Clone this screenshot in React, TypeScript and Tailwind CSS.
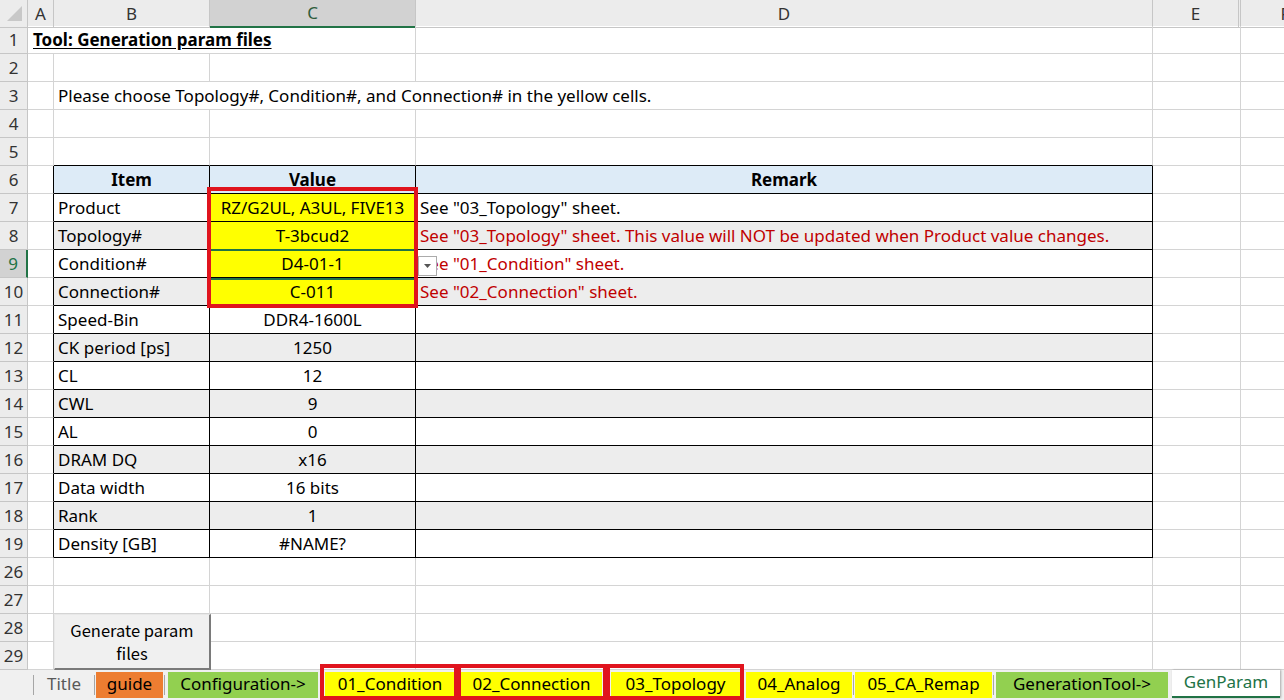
import React from "react";

const COLS = "grid grid-cols-[28px_26px_156px_206px_737px_88px_1fr]";
const GL = "border-[#d4d4d4]";

type DataRow = { n: number; item: string; value: string; remark?: string; red?: boolean; gray?: boolean; yellow?: boolean };

const data: DataRow[] = [
  { n: 7, item: "Product", value: "RZ/G2UL, A3UL, FIVE13", remark: 'See "03_Topology" sheet.', yellow: true },
  { n: 8, item: "Topology#", value: "T-3bcud2", remark: 'See "03_Topology" sheet. This value will NOT be updated when Product value changes.', red: true, gray: true, yellow: true },
  { n: 9, item: "Condition#", value: "D4-01-1", remark: 'See "01_Condition" sheet.', red: true, yellow: true },
  { n: 10, item: "Connection#", value: "C-011", remark: 'See "02_Connection" sheet.', red: true, gray: true, yellow: true },
  { n: 11, item: "Speed-Bin", value: "DDR4-1600L" },
  { n: 12, item: "CK period [ps]", value: "1250", gray: true },
  { n: 13, item: "CL", value: "12" },
  { n: 14, item: "CWL", value: "9", gray: true },
  { n: 15, item: "AL", value: "0" },
  { n: 16, item: "DRAM DQ", value: "x16", gray: true },
  { n: 17, item: "Data width", value: "16 bits" },
  { n: 18, item: "Rank", value: "1", gray: true },
  { n: 19, item: "Density [GB]", value: "#NAME?" },
];

function RowHead({ n, sel }: { n: number; sel?: boolean }) {
  return sel ? (
    <div className="flex items-center justify-center bg-[#d2d2d2] text-[#217346] border-r-2 border-r-[#217346] border-b border-b-[#c6c6c6]">{n}</div>
  ) : (
    <div className="flex items-center justify-center bg-[#ececec] text-[#333] border-r border-b border-[#c6c6c6]">{n}</div>
  );
}

function EmptyRow({ n, blackBottomBD }: { n: number; blackBottomBD?: boolean }) {
  const bb = blackBottomBD ? "border-b-black" : "";
  return (
    <div className={`${COLS} h-[28px]`}>
      <RowHead n={n} />
      <div className={`border-r border-b ${GL}`} />
      <div className={`border-r border-b ${GL} ${bb}`} />
      <div className={`border-r border-b ${GL} ${bb}`} />
      <div className={`border-r border-b ${GL} ${bb}`} />
      <div className={`border-r border-b ${GL}`} />
      <div className={`border-b ${GL}`} />
    </div>
  );
}

function Tab({ label, cls, ml, w }: { label: string; cls: string; ml: string; w: string }) {
  return (
    <div className={`${ml} ${w} h-[26px] flex items-center justify-center pb-[2px] ${cls}`}>{label}</div>
  );
}

function Sep({ ml }: { ml: string }) {
  return <div className={`${ml} w-px h-[20px] bg-[#a6a6a6]`} />;
}

export default function App() {
  return (
    <div className="relative w-[1284px] h-[700px] overflow-hidden bg-white text-[17px] text-black" style={{ fontFamily: '"Noto Sans", "Open Sans", sans-serif' }}>
      {/* Column headers */}
      <div className={`${COLS} h-[26px] bg-[#ececec]`}>
        <div className="relative border-r border-b border-[#c6c6c6]">
          <svg width="28" height="26" className="absolute inset-0">
            <polygon points="22,6 22,21 7,21" fill="#c8c8c8" />
          </svg>
        </div>
        <div className="flex items-center justify-center border-r border-b border-[#c6c6c6] text-[#333]">A</div>
        <div className="flex items-center justify-center border-r border-b border-[#c6c6c6] text-[#333]">B</div>
        <div className="flex items-center justify-center border-r border-[#c6c6c6] bg-[#d2d2d2] border-b-2 border-b-[#217346] text-[#2e5d3c]">C</div>
        <div className="flex items-center justify-center border-r border-b border-[#c6c6c6] text-[#333]">D</div>
        <div className="flex items-center justify-center border-r-[3px] border-double border-b border-[#c6c6c6] text-[#333]">E</div>
        <div className="border-b border-[#c6c6c6] text-[#333] overflow-hidden">
          <div className="w-[88px] h-full flex items-center justify-center">F</div>
        </div>
      </div>

      {/* Row 1 */}
      <div className={`${COLS} h-[28px]`}>
        <RowHead n={1} />
        <div className={`col-span-3 border-r border-b ${GL} flex items-center pl-[5px] font-bold underline underline-offset-2 whitespace-nowrap`}>Tool: Generation param files</div>
        <div className={`border-r border-b ${GL}`} />
        <div className={`border-r border-b ${GL}`} />
        <div className={`border-b ${GL}`} />
      </div>
      <EmptyRow n={2} />
      {/* Row 3 */}
      <div className={`${COLS} h-[28px]`}>
        <RowHead n={3} />
        <div className={`border-r border-b ${GL}`} />
        <div className={`col-span-3 border-r border-b ${GL} flex items-center pl-[4px] whitespace-nowrap`}>Please choose Topology#, Condition#, and Connection# in the yellow cells.</div>
        <div className={`border-r border-b ${GL}`} />
        <div className={`border-b ${GL}`} />
      </div>
      <EmptyRow n={4} />
      <EmptyRow n={5} blackBottomBD />

      {/* Row 6 header */}
      <div className={`${COLS} h-[28px]`}>
        <RowHead n={6} />
        <div className={`border-r border-b ${GL} border-r-black`} />
        <div className="border-r border-b border-black bg-[#ddebf7] flex items-center justify-center font-bold">Item</div>
        <div className="border-r border-b border-black bg-[#ddebf7] flex items-center justify-center font-bold">Value</div>
        <div className="border-r border-b border-black bg-[#ddebf7] flex items-center justify-center font-bold">Remark</div>
        <div className={`border-r border-b ${GL}`} />
        <div className={`border-b ${GL}`} />
      </div>

      {data.map((r) => {
        const bg = r.gray ? "bg-[#ededed]" : "bg-white";
        return (
          <div key={r.n} className={`${COLS} h-[28px]`}>
            <RowHead n={r.n} sel={r.n === 9} />
            <div className={`border-r border-b ${GL} border-r-black`} />
            <div className={`border-r border-b border-black ${bg} flex items-center pl-[4px] whitespace-nowrap`}>{r.item}</div>
            <div className={`border-r border-b border-black ${r.yellow ? "bg-[#ffff00]" : bg} flex items-center justify-center whitespace-nowrap`}>{r.value}</div>
            <div className={`border-r border-b border-black ${bg} flex items-center pl-[4px] whitespace-nowrap overflow-hidden ${r.red ? "text-[#c00000]" : ""}`}>{r.remark ?? ""}</div>
            <div className={`border-r border-b ${GL}`} />
            <div className={`border-b ${GL}`} />
          </div>
        );
      })}

      <EmptyRow n={26} />
      <EmptyRow n={27} />
      <EmptyRow n={28} />
      <EmptyRow n={29} />

      {/* Tab bar */}
      <div className="flex items-center h-[30px] bg-[#f0f0f0]">
        <Sep ml="ml-[33px]" />
        <Tab label="Title" cls="text-[#595959]" ml="ml-0" w="w-[60px]" />
        <Sep ml="ml-0" />
        <Tab label="guide" cls="bg-[#ed7d31] text-black" ml="ml-[1px]" w="w-[67px]" />
        <Sep ml="ml-[1px]" />
        <Tab label="Configuration->" cls="bg-[#92d050] text-black" ml="ml-[3px]" w="w-[150px]" />
        <Sep ml="ml-[3px]" />
        <Tab label="01_Condition" cls="bg-[#ffff00] text-black" ml="ml-[3px]" w="w-[130px]" />
        <Tab label="02_Connection" cls="bg-[#ffff00] text-black" ml="ml-[6px]" w="w-[141px]" />
        <Sep ml="ml-[3px]" />
        <Tab label="03_Topology" cls="bg-[#ffff00] text-black" ml="ml-[5px]" w="w-[129px]" />
        <Sep ml="ml-[2px]" />
        <Tab label="04_Analog" cls="bg-[#ffff00] text-black" ml="ml-[3px]" w="w-[106px]" />
        <Sep ml="ml-[1px]" />
        <Tab label="05_CA_Remap" cls="bg-[#ffff00] text-black" ml="ml-[1px]" w="w-[137px]" />
        <Sep ml="ml-[1px]" />
        <Tab label="GenerationTool->" cls="bg-[#92d050] text-black" ml="ml-[2px]" w="w-[172px]" />
        <div className="ml-[4px] w-[108px] h-[28px] self-start flex items-center justify-center pb-[2px] bg-white text-[#217346] border-b-2 border-b-[#217346] shadow-[1px_0_2px_rgba(0,0,0,0.3)]">GenParam</div>
      </div>

      {/* Overlays */}
      {/* Selection of C9 */}
      <div className="absolute left-[209px] top-[249px] w-[209px] h-[31px] border-2 border-[#217346]" />
      {/* Red box C7-C10 */}
      <div className="absolute left-[207px] top-[187px] w-[211px] h-[121px] border-4 border-[#e0141e]" />
      {/* Dropdown button */}
      <div className="absolute left-[418px] top-[256px] w-[19px] h-[20px] bg-white border border-[#ababab] flex items-center justify-center">
        <svg width="7" height="4" viewBox="0 0 7 4"><polygon points="0,0 7,0 3.5,4" fill="#555" /></svg>
      </div>
      {/* Generate button */}
      <div className="absolute left-[54px] top-[614px] w-[157px] h-[56px] bg-[#f0f0f0] border-r-2 border-b-2 border-[#7a7a7a] border-l border-t border-l-[#e8e8e8] border-t-[#e8e8e8] flex items-center justify-center text-center text-[16.5px] leading-[23px] text-black" style={{ fontFamily: '"Noto Sans CJK JP", sans-serif' }}>
        Generate param<br />files
      </div>
      {/* Red boxes on tabs */}
      <div className="absolute left-[320px] top-[664px] w-[138px] h-[36px] border-4 border-[#e0141e]" />
      <div className="absolute left-[457px] top-[664px] w-[150px] h-[36px] border-4 border-[#e0141e]" />
      <div className="absolute left-[606px] top-[664px] w-[138px] h-[36px] border-4 border-[#e0141e]" />
    </div>
  );
}
